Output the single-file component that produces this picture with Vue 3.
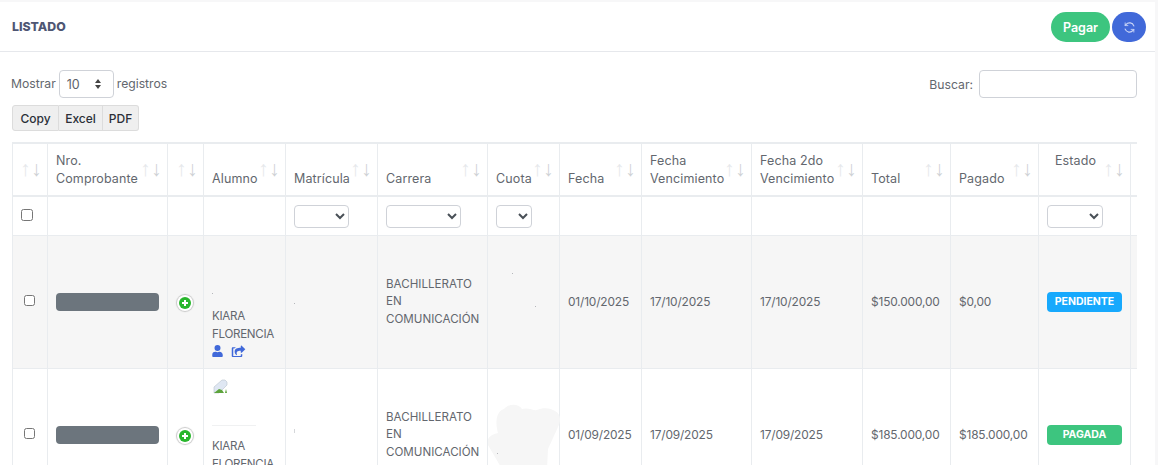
<script setup>
const columns = [
  { w: 35 }, { w: 120, label: ['Nro.', 'Comprobante'] }, { w: 36 },
  { w: 82, label: ['Alumno'] }, { w: 92, label: ['Matrícula'] }, { w: 110, label: ['Carrera'] },
  { w: 72, label: ['Cuota'] }, { w: 82, label: ['Fecha'] },
  { w: 110, label: ['Fecha', 'Vencimiento'] }, { w: 111, label: ['Fecha 2do', 'Vencimiento'] },
  { w: 88, label: ['Total'] }, { w: 88, label: ['Pagado'] },
  { w: 92, label: ['Estado', '\u00a0'], center: true }, { w: 60 }
]
const filters = { 4: 55, 5: 75, 6: 36, 12: 56 }
const rows = [
  { fecha: '01/10/2025', v1: '17/10/2025', v2: '17/10/2025', total: '$150.000,00', pagado: '$0,00', estado: 'PENDIENTE', cls: 'pendiente', first: true },
  { fecha: '01/09/2025', v1: '17/09/2025', v2: '17/09/2025', total: '$185.000,00', pagado: '$185.000,00', estado: 'PAGADA', cls: 'pagada', first: false }
]
</script>

<template>
  <div class="page">
    <section class="card">
      <header class="card-head">
        <h1>LISTADO</h1>
        <div class="actions">
          <button class="pay">Pagar</button>
          <button class="sync" aria-label="Actualizar">
            <svg width="13" height="13" viewBox="0 0 24 24" fill="none" stroke="#c9d4f6" stroke-width="2.2" stroke-linecap="round">
              <path d="M20 9A8.5 8.5 0 0 0 5.5 6.5L4 8" />
              <path d="M4 3.5V8.5H9" stroke-width="1.6" />
              <path d="M4 15a8.5 8.5 0 0 0 14.5 2.5L20 16" />
              <path d="M20 20.5V15.5H15" stroke-width="1.6" />
            </svg>
          </button>
        </div>
      </header>

      <div class="card-body">
        <div class="controls">
          <label class="length">Mostrar <select class="len-select"><option>10</option></select> registros</label>
          <label class="search">Buscar: <input type="text" /></label>
        </div>
        <div class="tools">
          <button>Copy</button><button>Excel</button><button>PDF</button>
        </div>

        <div class="table-wrap">
          <table>
            <colgroup>
              <col v-for="(c, i) in columns" :key="i" :style="{ width: c.w + 'px' }" />
            </colgroup>
            <thead>
              <tr class="titles">
                <th v-for="(c, i) in columns" :key="i" :class="{ center: c.center }">
                  <template v-for="(l, j) in c.label || []" :key="j">{{ l }}<br v-if="j < c.label.length - 1" /></template>
                </th>
              </tr>
              <tr class="filters">
                <th v-for="(c, i) in columns" :key="i">
                  <input v-if="i === 0" type="checkbox" class="check-all" />
                  <select v-if="filters[i]" :style="{ width: filters[i] + 'px' }"><option></option></select>
                </th>
              </tr>
            </thead>
            <tbody>
              <tr v-for="(r, k) in rows" :key="k" :class="{ striped: r.first }">
                <td class="check-cell"><input type="checkbox" /></td>
                <td><div class="redact"></div></td>
                <td class="plus-cell">
                  <span class="plus">
                    <svg width="12" height="12" viewBox="0 0 12 12">
                      <circle cx="6" cy="6" r="6" fill="#28b62c" />
                      <path d="M6 3v6M3 6h6" stroke="#fff" stroke-width="2" />
                    </svg>
                  </span>
                </td>
                <td class="alumno" :class="r.first ? 'alumno-one' : 'alumno-two'">
                  <svg v-if="!r.first" class="broken" width="15" height="15" viewBox="0 0 15 15">
                    <path d="M1 14V8L9 1h3l2 2v3L6 14z" fill="#dfe7f3" stroke="#b9c2cc" stroke-width=".6" />
                    <path d="M1 14l5-4 3 1 2 3z" fill="#5da33c" />
                    <path d="M13 10l1 4h-2z" fill="#5da33c" />
                  </svg>
                  <span class="speck" :class="r.first ? 'sp-a1' : 'sp-a2'"></span>
                  <div>KIARA<br />FLORENCIA</div>
                  <div v-if="r.first" class="links">
                    <svg width="11" height="12" viewBox="0 0 448 512" fill="#4169d9">
                      <path d="M224 256a128 128 0 1 0 0-256 128 128 0 0 0 0 256zm90 32h-17a174 174 0 0 1-146 0h-17A134 134 0 0 0 0 422v42c0 27 21 48 48 48h352c27 0 48-21 48-48v-42c0-74-60-134-134-134z" />
                    </svg>
                    <svg width="15" height="12" viewBox="0 0 576 512" fill="#4169d9">
                      <path d="M568 167L424 31c-15-14-40-4-40 17v72c-145 2-261 31-261 169 0 56 36 111 76 140 12 9 30-2 25-17-41-132 20-167 160-169v69c0 21 25 31 40 17l144-136c10-9 10-26 0-36zM384 408v56H64V144h51c2 0 3-1 4-2 15-16 33-28 54-37 7-3 5-9-3-9H48C21 96 0 117 0 144v320c0 27 21 48 48 48h352c27 0 48-21 48-48v-66c0-8-8-13-16-11-7 3-30 9-48 21z" />
                    </svg>
                  </div>
                </td>
                <td class="matricula"><span class="speck" :class="r.first ? 'sp-m1' : 'sp-m2'"></span></td>
                <td class="caps">BACHILLERATO<br />EN<br />COMUNICACIÓN</td>
                <td class="cuota">
                  <svg v-if="!r.first" class="smudge" width="73" height="66" viewBox="0 0 73 66">
                    <path d="M10 30C7 20 8 8 16 6c4-5 14-6 18 0 6-2 12 2 15 1 6-3 14-2 18 1 6 3 6 10 3 16L60 46l-1 20H14L0 42c-2-5 1-10 10-12z" fill="#f6f6f6" />
                  </svg>
                  <template v-if="r.first">
                    <span class="speck sp-c1"></span><span class="speck sp-c2"></span>
                  </template>
                  <span v-else class="speck sp-c3"></span>
                </td>
                <td class="num">{{ r.fecha }}</td>
                <td class="num">{{ r.v1 }}</td>
                <td class="num">{{ r.v2 }}</td>
                <td class="num">{{ r.total }}</td>
                <td class="num">{{ r.pagado }}</td>
                <td><span class="badge" :class="r.cls">{{ r.estado }}</span></td>
                <td></td>
              </tr>
            </tbody>
          </table>
        </div>
      </div>
    </section>
  </div>
</template>

<style>
html, body { margin: 0; background: #f7f7f8; overflow: hidden; }
</style>

<style scoped>
.page {
  height: 465px;
  overflow: hidden;
  padding-top: 2px;
  box-sizing: border-box;
  font-family: Inter, "Open Sans", sans-serif;
  font-size: 12.5px;
  color: #63676e;
}
.card { width: 1155px; height: 463px; background: #fff; overflow: hidden; }
.card-head {
  height: 49px;
  border-bottom: 1px solid #e6e8ec;
  display: flex;
  justify-content: space-between;
  align-items: center;
  padding: 0 9px 0 12px;
  box-sizing: content-box;
}
h1 { margin: 0; font-size: 12.3px; font-weight: 800; color: #4e5673; }
.actions { display: flex; gap: 2px; align-items: center; padding-top: 1px; }
button { font-family: inherit; cursor: pointer; }
.pay {
  width: 59px; height: 30px; border: 0; border-radius: 15px;
  background: #3dc57f; color: #fff; font-size: 12.5px; font-weight: 600; padding: 0;
}
.sync {
  width: 34px; height: 30px; border: 0; border-radius: 15px;
  background: #4169d9; padding: 0; display: flex; align-items: center; justify-content: center;
}
.card-body { padding: 18px 18px 0 12px; }
.controls { display: flex; justify-content: space-between; align-items: center; height: 28px; font-size: 12.2px; }
.length { margin-left: -1px; display: flex; align-items: center; gap: 3px; line-height: 26px; }
.len-select {
  appearance: none;
  width: 55px; height: 28px; box-sizing: border-box;
  border: 1px solid #cfd2d8; border-radius: 4px;
  padding: 0 0 0 7px; color: #5d6169;
  font: 12.5px Inter, sans-serif;
  background: #fff url("data:image/svg+xml,%3Csvg xmlns='http://www.w3.org/2000/svg' width='8' height='10'%3E%3Cpath d='M4 0l3 4H1zM4 10L1 6h6z' fill='%23444'/%3E%3C/svg%3E") no-repeat right 11px center;
}
.search { display: flex; align-items: center; gap: 6px; }
.search input {
  width: 158px; height: 28px; box-sizing: border-box;
  border: 1px solid #cfd2d8; border-radius: 4px; background: #fff;
}
.tools { display: flex; margin-top: 7px; height: 26px; }
.tools button {
  height: 26px; padding: 0; box-sizing: border-box;
  border: 1px solid #dcdcdc; border-left: 0; background: #efefef;
  color: #2b2f38; font-size: 12px; font-weight: 500;
}
.tools button:nth-child(1) { width: 47px; border-left: 1px solid #dcdcdc; border-radius: 3px 0 0 3px; }
.tools button:nth-child(2) { width: 44px; }
.tools button:nth-child(3) { width: 36px; border-radius: 0 3px 3px 0; }
.table-wrap { margin-top: 11px; width: 1125px; overflow: hidden; }
table {
  width: 1178px;
  table-layout: fixed;
  border-collapse: collapse;
  border-top: 2px solid #e9ecef;
  border-left: 1px solid #e9ecef;
}
th, td {
  border: 1px solid #e9ecef;
  padding: 0 8px;
  text-align: left;
  white-space: nowrap;
  line-height: 18px;
  font-weight: 400;
  color: #63676e;
}
.titles th {
  height: 53px;
  position: relative;
  vertical-align: bottom;
  padding-bottom: 7px;
  border-bottom-width: 2px;
  box-sizing: border-box;
  letter-spacing: .12px;
}
.titles th.center { text-align: center; padding-right: 26px; }
.titles th::before, .titles th::after {
  position: absolute;
  top: 16px;
  width: 10px;
  text-align: center;
  font-family: "Liberation Sans", sans-serif;
  font-size: 21px;
  line-height: 18px;
  letter-spacing: 0;
}
.titles th::before { content: "↑"; right: 17px; color: #e6e8eb; }
.titles th::after { content: "↓"; right: 6px; color: #cfd2d6; }
.titles th:last-child::before, .titles th:last-child::after { content: none; }
.filters th { height: 37px; vertical-align: middle; padding-top: 1px; padding-bottom: 0; }
.filters select {
  display: block;
  height: 23px; box-sizing: border-box;
  border: 1px solid #cfd2d8; border-radius: 4px; background: #fff;
  color: #495057;
  font-size: 12px;
}
.check-all { display: block; width: 12px; height: 12px; margin: -4px 0 0 0; }
tbody tr { height: 133px; }
tbody td { line-height: 17.5px; }
.striped td { background: #f6f6f6; }
.check-cell { padding-left: 11px; }
.check-cell input { display: block; width: 11px; height: 11px; margin: -3px 0 0 0; }
.redact { width: 103px; height: 18px; border-radius: 4px; background: #6c757d; }
.plus-cell { padding: 0 0 0 9px; }
.plus {
  display: flex; align-items: center; justify-content: center;
  width: 16px; height: 16px; border-radius: 50%;
  background: #fff; box-shadow: 0 0 1px 1px #c8c8c8;
  margin-top: 1px;
}
.plus svg { display: block; }
.caps { font-size: 11.6px; }
.num { font-size: 11.9px; letter-spacing: -.15px; }
.alumno { position: relative; font-size: 11.6px; letter-spacing: -.3px; }
.alumno-one { vertical-align: bottom; padding-bottom: 10px; }
.alumno-two { vertical-align: top; padding-top: 10px; }
.broken { display: block; margin: 0 0 44px 1px; }
.links { display: flex; gap: 8px; align-items: center; height: 15px; }
.matricula, .cuota { position: relative; }
.smudge { position: absolute; left: 0; top: 34px; }
.speck { position: absolute; width: 1px; height: 1px; background: #b5b7bb; }
.sp-a1 { left: 8px; top: 57px; }
.sp-a2 { left: 8px; top: 56px; width: 44px; height: 1px; background: #f0f1f2; }
.sp-m1 { left: 8px; top: 67px; }
.sp-m2 { left: 8px; top: 60px; height: 4px; background: #d5d7da; }
.sp-c1 { left: 24px; top: 37px; }
.sp-c2 { left: 47px; top: 70px; }
.sp-c3 { left: 9px; top: 84px; }
.badge {
  display: block; width: 75px; height: 20px; line-height: 20px;
  border-radius: 4px; color: #fff; text-align: center;
  font-size: 10.5px; font-weight: 700;
}
.pendiente { background: #17a9fd; }
.pagada { background: #3dc57f; }
</style>
